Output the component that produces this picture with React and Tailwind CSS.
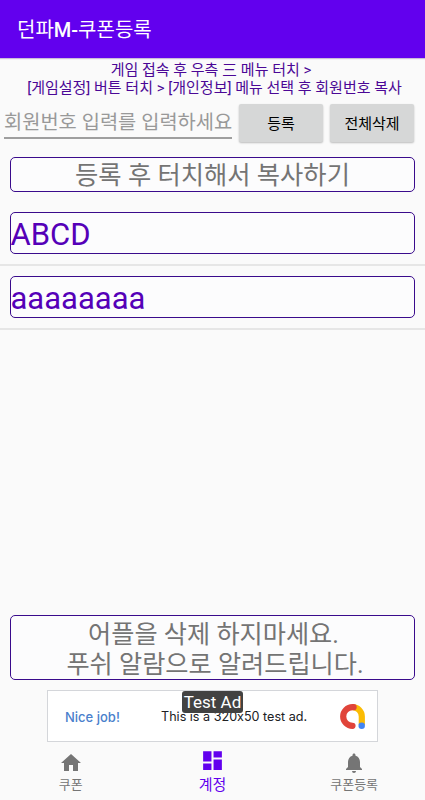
import { MdHome, MdDashboard, MdNotifications } from 'react-icons/md';

const coupons = ['ABCD', 'aaaaaaaa'];

function AdMobLogo() {
  return (
    <svg viewBox="0 0 25 25" className="w-[25px] h-[25px]" fill="none">
      <path d="M12.5 3.2A9.3 9.3 0 0 1 21.8 12.5V21" stroke="#fbbc04" strokeWidth="6.2" />
      <path d="M13.6 3.2H12.5A9.3 9.3 0 1 0 12.5 21.8" stroke="#e0443a" strokeWidth="6.2" strokeLinecap="round" />
      <circle cx="21.7" cy="21.7" r="3.2" fill="#4285f4" />
    </svg>
  );
}

function AdBanner() {
  return (
    <div className="relative flex items-center w-[331px] h-[52px] mx-auto pl-[17px] pr-3 bg-white border border-[#d4d6da] font-['Inter','Liberation_Sans',sans-serif] whitespace-nowrap [font-feature-settings:'calt'_0]">
      <span className="w-[96px] pt-[3px] text-[13px] font-medium text-[#4a80cc]">Nice job!</span>
      <span className="pt-[3px] text-[12.6px] text-[#202124]">This is a 320x50 test ad.</span>
      <span className="ml-auto">
        <AdMobLogo />
      </span>
      <span className="absolute left-[134px] top-0 w-[61px] h-[22px] rounded-[3px] bg-[#424242] text-center text-white text-[17px] leading-[23px] font-['Roboto',sans-serif]">
        Test Ad
      </span>
    </div>
  );
}

function CouponRow({ code }) {
  return (
    <li className="h-16 px-[10px] pt-[10px] border-b-2 border-[#e6e6e6]">
      <div className="h-[42px] border border-[#3a0b8c] rounded-[5px] bg-[#fcfcfd] text-[31px] leading-[44px] -indent-[0.5px] text-[#5500b8]">
        {code}
      </div>
    </li>
  );
}

export default function App() {
  return (
    <div className="flex flex-col w-[425px] h-[800px] overflow-hidden bg-[#fafafa] font-['Roboto','Noto_Sans_CJK_KR',sans-serif]">
      <header className="h-[58px] shrink-0 pl-[17px] bg-[#6200ee] text-[20px] leading-[60px] text-white shadow-[0_1px_1px_rgba(60,0,120,0.25)]">
        <h1>
          던파<span className="font-medium">M-</span>쿠폰등록
        </h1>
      </header>

      <p className="h-[40px] pt-[3px] pl-[4px] text-center text-[15px] leading-[18px] text-[#4b0796] whitespace-nowrap">
        <span className="block pr-[7px]">게임 접속 후 우측 三 메뉴 터치 &gt;</span>
        <span className="block">[게임설정] 버튼 터치 &gt; [개인정보] 메뉴 선택 후 회원번호 복사</span>
      </p>

      <div className="flex h-[59px] pt-[6px] pl-1 text-[15px]">
        <input
          type="text"
          placeholder="회원번호 입력를 입력하세요"
          className="w-[228px] h-[35px] pt-[3px] border-b-2 border-[#9f9f9f] outline-none text-[19.8px] placeholder:text-[#999999]"
        />
        <button className="w-[84px] h-[38px] ml-[7px] pt-[2px] rounded-[2px] bg-[#d6d7d7] text-black shadow-[0_1px_2px_rgba(0,0,0,0.25)]">
          등록
        </button>
        <button className="w-[84px] h-[38px] ml-[7px] pt-[2px] rounded-[2px] bg-[#d6d7d7] text-black shadow-[0_1px_2px_rgba(0,0,0,0.25)]">
          전체삭제
        </button>
      </div>

      <div className="h-[35px] mx-[10px] border border-[#3a0b8c] rounded-[5px] bg-[#fcfcfd] text-center text-[25.3px] leading-[36px] text-[#747474]">
        등록 후 터치해서 복사하기
      </div>

      <ul className="mt-[10px]">
        {coupons.map((code) => (
          <CouponRow key={code} code={code} />
        ))}
      </ul>

      <div className="h-[65px] mt-auto mb-[10px] mx-[10px] pt-[4px] pl-[2px] border border-[#3a0b8c] rounded-[5px] bg-[#fcfcfd] text-center text-[25.2px] leading-[30px] text-[#747474]">
        어플을 삭제 하지마세요.
        <br />
        <span className="pl-[3px]">푸쉬 알람으로 알려드립니다.</span>
      </div>

      <AdBanner />

      <nav className="grid grid-cols-3 h-[58px] shrink-0 text-[#757575] text-[13px]">
        <a className="flex flex-col items-center pt-[9px]">
          <MdHome className="w-6 h-6" />
          <span className="leading-[20px]">쿠폰</span>
        </a>
        <a className="flex flex-col items-center pt-[6px] text-[#6200ee]">
          <MdDashboard className="w-[25px] h-[25px]" />
          <span className="text-[15px] leading-[24px]">계정</span>
        </a>
        <a className="flex flex-col items-center pt-[9px]">
          <MdNotifications className="w-6 h-6" />
          <span className="leading-[20px]">쿠폰등록</span>
        </a>
      </nav>
    </div>
  );
}
